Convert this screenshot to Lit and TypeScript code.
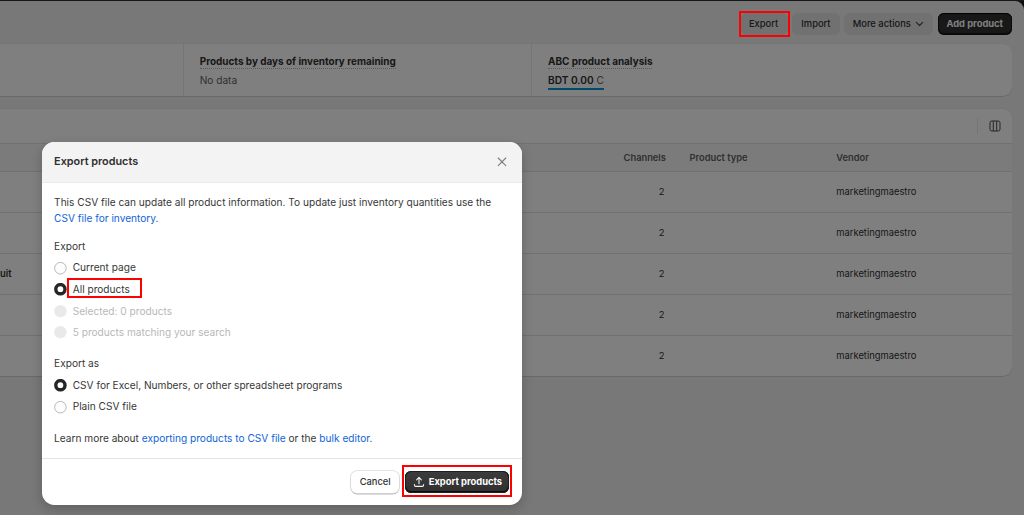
import { LitElement, html, css, svg } from "lit";
import { customElement, property } from "lit/decorators.js";

@customElement("radio-option")
class RadioOption extends LitElement {
  @property() label = "";
  @property({ type: Boolean }) checked = false;
  @property({ type: Boolean }) disabled = false;

  static styles = css`
    :host {
      display: flex;
      align-items: center;
      gap: 6px;
      height: 15.5px;
      color: #383838;
    }
    .dot {
      display: block;
      width: 13px;
      height: 13px;
      margin-right: -0.4px;
    }
    .label.off {
      color: #b8b8b8;
    }
  `;

  render() {
    const mode = this.checked ? "on" : this.disabled ? "off" : "";
    const mark = this.checked
      ? svg`<circle cx="6.4" cy="6.2" r="4.6" fill="#fff" stroke="#262626" stroke-width="3.4" />`
      : this.disabled
        ? svg`<circle cx="6.4" cy="6.2" r="6.2" fill="#e9e9e9" />`
        : svg`<circle cx="6.4" cy="6.2" r="5.8" fill="#fdfdfd" stroke="#a8a8a8" stroke-width="0.8" />`;
    return html`<svg class="dot" viewBox="0 0 13 13">${mark}</svg><span class="label ${mode}">${this.label}</span>`;
  }
}

@customElement("app-root")
class AppRoot extends LitElement {
  private rows = ["", "", "uit", "", ""];

  static styles = css`
    :host {
      display: block;
      position: relative;
      width: 1024px;
      height: 515px;
      overflow: hidden;
      background: #1a1a1a;
      font-family: Inter, sans-serif;
      font-size: 10.13px;
      line-height: 15.5px;
      color: #303030;
    }
    * {
      box-sizing: border-box;
    }
    .page {
      height: 515px;
      border-top: 1px solid #303030;
      background: #1a1a1a;
    }
    .sheet {
      padding-right: 12px;
      height: 514px;
      background: #f1f1f1;
      border-top-right-radius: 9px;
    }
    .actions {
      display: flex;
      justify-content: flex-end;
      gap: 4.6px;
      height: 42.7px;
      padding-top: 12px;
    }
    .btn {
      display: flex;
      align-items: center;
      justify-content: center;
      height: 21.7px;
      border-radius: 6.2px;
      background: #e3e3e3;
      font-size: 9.35px;
      font-weight: 550;
      white-space: nowrap;
    }
    .b-export { width: 48px; }
    .b-import { width: 47.6px; }
    .b-more { width: 88.6px; gap: 4.6px; }
    .b-add {
      width: 74.5px;
      background: #303030;
      color: #fff;
      font-weight: 650;
      box-shadow: inset 0 -1px 0 1px #141414, inset 0 1px 0 #000;
    }
    .card {
      background: #fff;
      border-radius: 0 9.3px 9.3px 0;
      box-shadow: 0 1px 0 rgba(26, 26, 26, 0.14), 0 -0.5px 0 rgba(26, 26, 26, 0.06);
    }
    .metrics {
      display: grid;
      grid-template-columns: 184px 348.3px 1fr;
      height: 52.5px;
    }
    .metric {
      border-right: 1px solid #ebebeb;
      padding: 10.3px 0 0 15.7px;
    }
    .metric:last-child { border-right: none; }
    .metric-title {
      display: inline-block;
      height: 15px;
      font-size: 9.95px;
      font-weight: 650;
      border-bottom: 1.5px dotted #b5b5b5;
      white-space: nowrap;
    }
    .metric-value { padding-top: 3.7px; color: #616161; }
    .money {
      display: inline-block;
      height: 16.5px;
      border-bottom: 2px solid #0094d5;
    }
    .money b { font-weight: 600; color: #303030; }
    .table {
      margin-top: 12.4px;
      height: 267px;
    }
    .tools {
      display: flex;
      align-items: center;
      justify-content: flex-end;
      height: 34.2px;
      padding-right: 11px;
    }
    .rule {
      width: 1px;
      height: 16px;
      margin-right: 11px;
      background: #ebebeb;
    }
    .row {
      display: grid;
      grid-template-columns: 500px 164.5px 171.8px 1fr;
      align-items: center;
      height: 41px;
      border-top: 1px solid #e3e3e3;
      font-size: 9.4px;
    }
    .head {
      height: 28.2px;
      background: #f7f7f7;
      color: #616161;
      font-size: 9.3px;
      font-weight: 600;
    }
    .num { text-align: right; }
    .head .num { margin-right: -1.4px; }
    .type { padding-left: 25px; }
    .name { font-weight: 600; }
    .scrim {
      position: absolute;
      inset: 0;
      background: rgba(0, 0, 0, 0.5);
    }
    .modal {
      position: absolute;
      left: 42px;
      top: 141.5px;
      width: 479.6px;
      height: 363px;
      display: flex;
      flex-direction: column;
      border-radius: 12.4px;
      background: #fff;
      overflow: hidden;
      box-shadow: 0 4px 12px rgba(0, 0, 0, 0.2);
    }
    .m-head {
      display: flex;
      align-items: center;
      justify-content: space-between;
      height: 41px;
      padding: 0 15px 0 12.1px;
      background: #f3f3f3;
      border-bottom: 1px solid #ebebeb;
      font-size: 10.85px;
      font-weight: 600;
    }
    .m-body {
      display: flex;
      flex-direction: column;
      height: 275.5px;
      padding: 12.9px 12.1px 12.4px;
      color: #383838;
    }
    a { color: #0f66d8; text-decoration: none; }
    p { margin: 0; white-space: nowrap; }
    .group {
      display: flex;
      flex-direction: column;
      gap: 6.1px;
      margin: 12.4px 0 0;
    }
    .group + .group { margin-top: 15.6px; }
    .learn { margin-top: 15.8px; }
    .m-foot {
      display: flex;
      align-items: center;
      justify-content: flex-end;
      gap: 6px;
      flex: 1;
      padding-right: 12.2px;
      border-top: 1px solid #e3e3e3;
    }
    .cancel {
      width: 48.5px;
      background: #fff;
      box-shadow: 0 0 0 0.8px #dcdcdc, 0 1px 0 0.5px #b5b5b5;
    }
    .primary {
      width: 104px;
      gap: 4px;
      background: linear-gradient(#3c3c3c, #303030);
      color: #fff;
      font-weight: 650;
      box-shadow: inset 0 0 0 1px #1e1e1e, inset 0 -1px 0 1px #0c0c0c;
    }
    .mark {
      position: absolute;
      border: 2px solid #f00;
    }
    .mark-export { left: 739px; top: 11px; width: 51px; height: 26px; }
    .mark-all { left: 67px; top: 278px; width: 75px; height: 20px; }
    .mark-submit { left: 402px; top: 465px; width: 110px; height: 32px; }
    svg { display: block; fill: none; }
  `;

  render() {
    return html`
      <div class="page">
        <div class="sheet">
          <div class="actions">
            <div class="btn b-export">Export</div>
            <div class="btn b-import">Import</div>
            <div class="btn b-more">
              <span>More actions</span>
              <svg width="9" height="6" viewBox="0 0 9 6" stroke="#4a4a4a" stroke-width="1.2" stroke-linecap="round" stroke-linejoin="round"><path d="M1.3 1.4 4.5 4.5 7.7 1.4" /></svg>
            </div>
            <div class="btn b-add">Add product</div>
          </div>
          <div class="card metrics">
            <div class="metric"></div>
            <div class="metric">
              <div class="metric-title">Products by days of inventory remaining</div>
              <div class="metric-value">No data</div>
            </div>
            <div class="metric">
              <div class="metric-title">ABC product analysis</div>
              <div class="metric-value"><span class="money"><b>BDT 0.00</b> C</span></div>
            </div>
          </div>
          <div class="card table">
            <div class="tools">
              <span class="rule"></span>
              <svg width="12" height="12" viewBox="0 0 12 12" stroke="#4a4a4a" stroke-width="1"><rect x="1" y="1" width="10" height="10" rx="1.8" /><path d="M4.3 1v10M7.7 1v10" /></svg>
            </div>
            <div class="row head">
              <span></span><span class="num">Channels</span><span class="type">Product type</span><span>Vendor</span>
            </div>
            ${this.rows.map(
              (name) => html`<div class="row">
                <span class="name">${name}</span><span class="num">2</span><span></span><span>marketingmaestro</span>
              </div>`
            )}
          </div>
        </div>
      </div>
      <div class="scrim"></div>
      <div class="modal">
        <div class="m-head">
          <span>Export products</span>
          <svg width="10" height="10" viewBox="0 0 10 10" stroke="#7c7c7c" stroke-width="1.1" stroke-linecap="round"><path d="M1.2 1 8.8 8.6M8.8 1 1.2 8.6" /></svg>
        </div>
        <div class="m-body">
          <p>This CSV file can update all product information. To update just inventory quantities use the</p>
          <p><a>CSV file for inventory</a>.</p>
          <div class="group">
            <span>Export</span>
            <radio-option label="Current page"></radio-option>
            <radio-option label="All products" checked></radio-option>
            <radio-option label="Selected: 0 products" disabled></radio-option>
            <radio-option label="5 products matching your search" disabled></radio-option>
          </div>
          <div class="group">
            <span>Export as</span>
            <radio-option label="CSV for Excel, Numbers, or other spreadsheet programs" checked></radio-option>
            <radio-option label="Plain CSV file"></radio-option>
          </div>
          <p class="learn">Learn more about <a>exporting products to CSV file</a> or the <a>bulk editor</a>.</p>
        </div>
        <div class="m-foot">
          <div class="btn cancel">Cancel</div>
          <div class="btn primary">
            <svg width="12" height="12" viewBox="0 0 12 12" stroke="#f2f2f2" stroke-width="1.1" stroke-linecap="round" stroke-linejoin="round"><path d="M6 7.8V1.6M3.6 3.8 6 1.4 8.4 3.8M1.4 8.6v.5c0 .8.5 1.3 1.3 1.3h6.6c.8 0 1.3-.5 1.3-1.3v-.5" /></svg>
            <span>Export products</span>
          </div>
        </div>
      </div>
      <div class="mark mark-export"></div>
      <div class="mark mark-all"></div>
      <div class="mark mark-submit"></div>
    `;
  }
}
